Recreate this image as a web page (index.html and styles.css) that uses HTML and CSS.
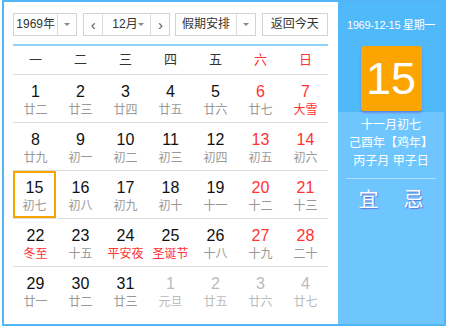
FILE: index.html
```html
<!DOCTYPE html>
<html lang="zh-CN">
<head>
  <meta charset="UTF-8" />
  <title>万年历</title>
  <link rel="stylesheet" href="styles.css">
</head>
<body>
  <div class="cal">
    <div class="main">
      <div class="toolbar">
        <div class="box year"><span class="val">1969年</span><span class="drop"><i class="tri"></i></span></div>
        <div class="box month">
          <span class="nav">&lsaquo;</span>
          <span class="mid"><span class="val">12月</span><i class="tri"></i></span>
          <span class="nav">&rsaquo;</span>
        </div>
        <div class="box holiday"><span class="val">假期安排</span><span class="drop"><i class="tri"></i></span></div>
        <div class="box today">返回今天</div>
      </div>

      <div class="weekdays">
        <span>一</span><span>二</span><span>三</span><span>四</span><span>五</span>
        <span class="red">六</span><span class="red">日</span>
      </div>

      <div class="days">
        <div class="day"><b>1</b><small>廿二</small></div>
        <div class="day"><b>2</b><small>廿三</small></div>
        <div class="day"><b>3</b><small>廿四</small></div>
        <div class="day"><b>4</b><small>廿五</small></div>
        <div class="day"><b>5</b><small>廿六</small></div>
        <div class="day wk"><b>6</b><small>廿七</small></div>
        <div class="day wk"><b>7</b><small class="fest">大雪</small></div>

        <div class="day"><b>8</b><small>廿九</small></div>
        <div class="day"><b>9</b><small>初一</small></div>
        <div class="day"><b>10</b><small>初二</small></div>
        <div class="day"><b>11</b><small>初三</small></div>
        <div class="day"><b>12</b><small>初四</small></div>
        <div class="day wk"><b>13</b><small>初五</small></div>
        <div class="day wk"><b>14</b><small>初六</small></div>

        <div class="day on"><b>15</b><small>初七</small></div>
        <div class="day"><b>16</b><small>初八</small></div>
        <div class="day"><b>17</b><small>初九</small></div>
        <div class="day"><b>18</b><small>初十</small></div>
        <div class="day"><b>19</b><small>十一</small></div>
        <div class="day wk"><b>20</b><small>十二</small></div>
        <div class="day wk"><b>21</b><small>十三</small></div>

        <div class="day"><b>22</b><small class="fest">冬至</small></div>
        <div class="day"><b>23</b><small>十五</small></div>
        <div class="day"><b>24</b><small class="fest">平安夜</small></div>
        <div class="day"><b>25</b><small class="fest">圣诞节</small></div>
        <div class="day"><b>26</b><small>十八</small></div>
        <div class="day wk"><b>27</b><small>十九</small></div>
        <div class="day wk"><b>28</b><small>二十</small></div>

        <div class="day"><b>29</b><small>廿一</small></div>
        <div class="day"><b>30</b><small>廿二</small></div>
        <div class="day"><b>31</b><small>廿三</small></div>
        <div class="day other"><b>1</b><small>元旦</small></div>
        <div class="day other"><b>2</b><small>廿五</small></div>
        <div class="day other"><b>3</b><small>廿六</small></div>
        <div class="day other"><b>4</b><small>廿七</small></div>
      </div>
    </div>

    <div class="side">
      <div class="side-top">
        <div class="date">1969-12-15 星期一</div>
        <div class="big">15</div>
      </div>
      <div class="side-bottom">
        <p>十一月初七</p>
        <p>己酉年【鸡年】</p>
        <p>丙子月 甲子日</p>
        <div class="sep"></div>
        <div class="yiji"><span>宜</span><span>忌</span></div>
      </div>
    </div>
  </div>
</body>
</html>
```

FILE: styles.css
```css
* { box-sizing: border-box; }

body {
  margin: 0;
  font-family: "Liberation Sans", "Noto Sans CJK SC", sans-serif;
  color: #222;
  background: #fff;
}

.cal {
  display: flex;
  width: 444px;
  height: 326px;
  margin-left: 2px;
  border: 2px solid #52b5f5;
}

/* left part */
.main {
  width: 334px;
  padding: 11px 10px 0 9px;
}

.toolbar {
  display: flex;
  height: 23px;
  font-size: 12px;
  color: #333;
}

.box {
  display: flex;
  align-items: center;
  height: 23px;
  border: 1px solid #d3d3d3;
  line-height: 21px;
}

.box .val { flex: 1; text-align: center; }

.drop {
  display: flex;
  align-items: center;
  justify-content: center;
  width: 19px;
  height: 100%;
  border-left: 1px solid #dcdcdc;
}

.tri {
  display: block;
  width: 0;
  height: 0;
  border-left: 3px solid transparent;
  border-right: 3px solid transparent;
  border-top: 3px solid #888;
}

.year { width: 65px; }

.month { width: 88px; margin-left: 6px; }
.month .nav {
  width: 19px;
  height: 100%;
  text-align: center;
  font-size: 15px;
  color: #555;
}
.month .nav:first-child { border-right: 1px solid #dcdcdc; }
.month .nav:last-child { border-left: 1px solid #dcdcdc; }
.month .mid {
  flex: 1;
  display: flex;
  align-items: center;
  padding: 0 6px 0 9px;
}
.month .mid .val { text-align: left; }

.holiday { width: 81px; margin-left: 5px; }

.today {
  width: 67px;
  margin-left: 6px;
  justify-content: center;
}

.weekdays {
  display: grid;
  grid-template-columns: repeat(7, 45px);
  margin-top: 8px;
  height: 31px;
  border-top: 2px solid #8fd0f7;
  border-bottom: 1px solid #dcdcdc;
  font-size: 13px;
  line-height: 28px;
  text-align: center;
  color: #333;
}

.red { color: #f33; }

.days {
  display: grid;
  grid-template-columns: repeat(7, 45px);
}

.day {
  height: 48px;
  padding-top: 7px;
  border-bottom: 1px solid #dcdcdc;
  text-align: center;
}
.day:nth-last-child(-n+7) { border-bottom: none; }

.day b {
  display: block;
  font-weight: normal;
  font-size: 16px;
  line-height: 20px;
  color: #111;
}

.day small {
  display: block;
  font-size: 12px;
  line-height: 16px;
  color: #999;
}

.day.wk b { color: #f33; }
.day small.fest { color: #f33; }
.day.other b,
.day.other small { color: #bbb; }

.day.on {
  box-shadow: inset 0 0 0 2px #f7a400;
  width: 43px;
}

/* right part */
.side {
  flex: 1;
  display: flex;
  flex-direction: column;
  color: #fff;
  background: #6fc6fe;
}

.side-top {
  height: 110px;
  padding-top: 15px;
  background: #4fb9f9;
  text-align: center;
}

.date {
  font-size: 11px;
  line-height: 16px;
  letter-spacing: -0.3px;
  white-space: nowrap;
}

.big {
  width: 61px;
  height: 65px;
  margin: 13px auto 0;
  border-radius: 3px;
  background: #fca500;
  box-shadow: 0 2px 2px rgba(100, 90, 210, 0.5);
  font-size: 45px;
  line-height: 65px;
}

.side-bottom {
  padding-top: 4px;
  text-align: center;
}

.side-bottom p {
  margin: 0;
  font-size: 12px;
  line-height: 18px;
}

.sep {
  width: 90px;
  height: 1px;
  margin: 8px auto 0;
  background: rgba(255, 255, 255, 0.45);
}

.yiji {
  display: flex;
  justify-content: center;
  gap: 25px;
  margin-top: 9px;
  font-size: 20px;
  line-height: 24px;
  text-shadow: 1px 1px 1px rgba(90, 80, 210, 0.7);
}
```
